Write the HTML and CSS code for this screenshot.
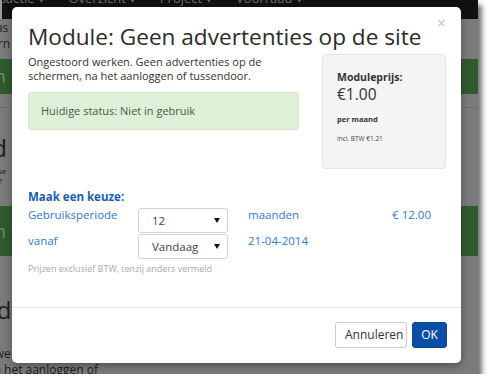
FILE: index.html
```html
<!DOCTYPE html>
<html lang="nl">
<head>
<meta charset="utf-8">
<title>Module: Geen advertenties op de site</title>
<link rel="stylesheet" href="styles.css">
</head>
<body>
<div class="shot">
  <div class="page">
    <nav class="navbar">
      <div class="nav-items">
        <span class="nav-item first">Transactie ▾</span>
        <span class="nav-item">Overzicht ▾</span>
        <span class="nav-item">Project ▾</span>
        <span class="nav-item">Voorraad ▾</span>
      </div>
    </nav>
    <div class="page-body">
      <p class="pg-line">Sitebeheer bas</p>
      <p class="pg-line">Modules intern</p>
      <div class="pg-green"><span>Aanmelden inl</span></div>
      <hr class="pg-rule">
      <p class="pg-big">Betaald</p>
      <p class="pg-small">Verzendkosten: se</p>
      <p class="pg-small">Uw gegevens n je</p>
      <p class="pg-small">Statistieken de</p>
      <div class="pg-green pg-green2"><span>Aanmelden inl</span></div>
      <p class="pg-big pg-big2">Geen adv</p>
      <p class="pg-line pg-we">Ongestoord we</p>
      <p class="pg-line">schermen, na het aanloggen of</p>
    </div>
  </div>

  <div class="modal">
    <div class="modal-header">
      <h1 class="modal-title">Module: Geen advertenties op de site</h1>
      <span class="close">×</span>
    </div>
    <div class="modal-body">
      <div class="intro">
        <div class="intro-text">
          <p class="lead">Ongestoord werken. Geen advertenties op de schermen, na het aanloggen of tussendoor.</p>
          <div class="alert">Huidige status: Niet in gebruik</div>
        </div>
        <div class="well">
          <div class="well-label">Moduleprijs:</div>
          <div class="well-price">€1.00</div>
          <div class="well-per">per maand</div>
          <div class="well-incl">incl. BTW €1.21</div>
        </div>
      </div>

      <h2 class="choice-title">Maak een keuze:</h2>
      <div class="choice-grid">
        <div class="c-label">Gebruiksperiode</div>
        <div class="select"><span>12</span><i class="caret"></i></div>
        <div class="c-text">maanden</div>
        <div class="c-price">€ 12.00</div>

        <div class="c-label">vanaf</div>
        <div class="select"><span>Vandaag</span><i class="caret"></i></div>
        <div class="c-text">21-04-2014</div>
        <div class="c-price"></div>
      </div>
      <p class="note">Prijzen exclusief BTW, tenzij anders vermeld</p>
    </div>
    <div class="modal-footer">
      <button class="btn btn-default">Annuleren</button>
      <button class="btn btn-primary">OK</button>
    </div>
  </div>
</div>
</body>
</html>
```

FILE: styles.css
```css
* { box-sizing: border-box; }

html, body {
  margin: 0;
  padding: 0;
  background: #ffffff;
}

body {
  font-family: "Open Sans", "DejaVu Sans", sans-serif;
  color: #333;
}

.shot {
  position: relative;
  width: 478px;
  height: 374px;
  background: #828282;
  box-shadow: 4px 5px 5px rgba(0, 0, 0, 0.55);
  overflow: hidden;
}

/* ---------- faux page behind the backdrop ---------- */
.page {
  width: 100%;
  height: 100%;
  border-left: 2px solid #9a9a9a;
}

.navbar {
  height: 19px;
  background: #111;
  overflow: hidden;
}

.nav-items {
  display: flex;
  margin-top: -11px;
  font-size: 13px;
  line-height: 18px;
  color: #6e6e6e;
}

.nav-item { margin-right: 24px; }
.nav-item.first { margin-left: -30px; }

.page-body {
  background: #7b7b7b;
  height: 355px;
  padding-top: 1px;
  margin-left: -2px;
  overflow: hidden;
}

.pg-line {
  margin: 0;
  font-size: 12px;
  line-height: 16px;
  color: #1c1c1c;
  white-space: nowrap;
  margin-left: -75px;
}

.pg-green {
  margin-top: 7px;
  height: 35px;
  background: #2f5a2e;
  color: #6f8f6a;
  font-size: 18px;
  line-height: 35px;
  white-space: nowrap;
  overflow: hidden;
}
.pg-green span { margin-left: -90px; display: inline-block; }

.pg-rule {
  margin: 13px 0 0;
  border: 0;
  border-top: 1px solid #6d6d6d;
}

.pg-big {
  margin: 26px 0 0;
  font-size: 24px;
  line-height: 28px;
  color: #1c1c1c;
  white-space: nowrap;
  margin-left: -78px;
}

.pg-small {
  margin: 0;
  font-size: 8px;
  line-height: 9px;
  height: 9px;
  color: #1c1c1c;
  white-space: nowrap;
  margin-left: -62px;
}
.pg-big + .pg-small { margin-top: 4px; }

.pg-green2 { margin-top: 13px; height: 50px; line-height: 50px; }

.pg-big2 { margin-top: 40px; margin-left: -82px; }

.pg-we { margin-top: 22px; }

/* ---------- modal ---------- */
.modal {
  position: absolute;
  left: 12px;
  top: 7px;
  width: 449px;
  height: 356px;
  background: #fff;
  border-radius: 5px;
  box-shadow: 0 3px 8px rgba(0, 0, 0, 0.35);
  display: flex;
  flex-direction: column;
}

.modal-header {
  position: relative;
  padding: 15px 15px 0 16px;
}

.modal-title {
  margin: 0;
  font-size: 22.6px;
  font-weight: 400;
  line-height: 29px;
  color: #2b2b2b;
  white-space: nowrap;
}

.close {
  position: absolute;
  right: 15px;
  top: 6px;
  font-size: 16px;
  line-height: 20px;
  color: #c4c4c4;
}

.modal-body {
  padding: 3px 15px 0 16px;
  flex: 1;
}

.intro {
  display: grid;
  grid-template-columns: 271px 124px;
  column-gap: 23px;
  align-items: start;
}

.lead {
  margin: 1px 0 9px;
  font-size: 11px;
  line-height: 14px;
  color: #333;
}

.alert {
  height: 38px;
  padding: 0 12px;
  background: #dff0d8;
  border: 1px solid #d6e9c6;
  border-radius: 3px;
  font-size: 11px;
  line-height: 36px;
  color: #4b5a48;
}

.well {
  height: 115px;
  padding: 14px 14px 0 14px;
  background: #f5f5f5;
  border: 1px solid #e3e3e3;
  border-radius: 4px;
}

.well-label {
  font-size: 10.5px;
  font-weight: 700;
  line-height: 16px;
  color: #333;
}

.well-price {
  font-size: 15.5px;
  line-height: 18px;
  color: #333;
}

.well-per {
  margin-top: 10px;
  font-size: 7.5px;
  font-weight: 700;
  line-height: 12px;
  color: #333;
}

.well-incl {
  margin-top: 9px;
  font-size: 6.5px;
  line-height: 10px;
  color: #444;
}

.choice-title {
  margin: 20px 0 0;
  font-size: 11.5px;
  font-weight: 700;
  line-height: 16px;
  color: #1b5fae;
}

.choice-grid {
  margin-top: 3px;
  display: grid;
  grid-template-columns: 110px 90px 1fr auto;
  grid-auto-rows: 25px;
  row-gap: 1px;
  font-size: 11.5px;
  line-height: 14px;
  color: #3479cf;
}

.c-label { padding-top: 0; }
.c-text { padding-left: 20px; }
.c-price { padding-right: 15px; text-align: right; }

.select {
  position: relative;
  height: 25px;
  border: 1px solid #d2d2d2;
  border-radius: 3px;
  padding-left: 13px;
  font-size: 11.5px;
  line-height: 23px;
  color: #444;
}

.caret {
  position: absolute;
  right: 7px;
  top: 9px;
  width: 0;
  height: 0;
  border-left: 3px solid transparent;
  border-right: 3px solid transparent;
  border-top: 5px solid #111;
}

.note {
  margin: 4px 0 0;
  font-size: 9px;
  line-height: 12px;
  color: #aaa;
}

.modal-footer {
  height: 56px;
  border-top: 1px solid #e5e5e5;
  padding: 14px 14px 0 15px;
  display: flex;
  justify-content: flex-end;
  gap: 5px;
}

.btn {
  height: 26px;
  padding: 0 9px;
  font-family: "Open Sans", "DejaVu Sans", sans-serif;
  font-size: 12px;
  line-height: 24px;
  border-radius: 3px;
  border: 1px solid transparent;
}

.btn-default {
  width: 72px;
  background: #fff;
  border-color: #ccc;
  color: #333;
}

.btn-primary {
  width: 35px;
  padding: 0;
  background: #0b4ea6;
  border-color: #0a4797;
  color: #fff;
}
```
